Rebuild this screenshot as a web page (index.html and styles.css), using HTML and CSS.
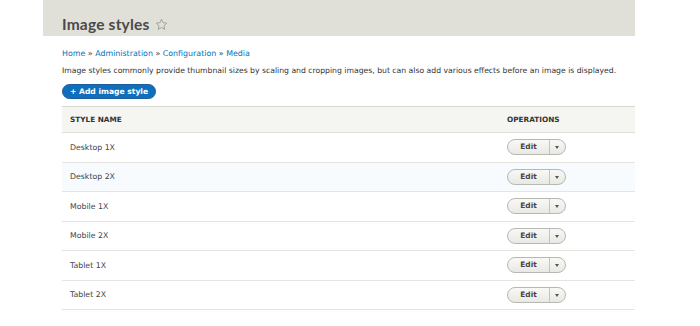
FILE: index.html
```html
<!DOCTYPE html>
<html>
<head>
<meta charset="utf-8">
<link rel="stylesheet" href="styles.css">
</head>
<body>
<div class="page">
  <header class="head">
    <h1 class="title">Image styles <svg class="star" width="13" height="13" viewBox="0 0 24 24"><path d="M12 2.5l2.9 6.2 6.8.8-5 4.7 1.3 6.7L12 17.6l-6 3.3 1.3-6.7-5-4.7 6.8-.8z" fill="none" stroke="#9a9a90" stroke-width="1.6" stroke-linejoin="round"/></svg></h1>
  </header>
  <main class="content">
    <nav class="crumbs"><a>Home</a> » <a>Administration</a> » <a>Configuration</a> » <a>Media</a></nav>
    <p class="desc">Image styles commonly provide thumbnail sizes by scaling and cropping images, but can also add various effects before an image is displayed.</p>
    <div class="actions"><a class="btn-primary">+ Add image style</a></div>
    <table class="tbl">
      <thead>
        <tr><th class="c-name">Style name</th><th class="c-ops">Operations</th></tr>
      </thead>
      <tbody>
        <tr><td>Desktop 1X</td><td class="c-ops"><span class="drop"><span class="drop-main">Edit</span><span class="drop-arrow"></span></span></td></tr>
        <tr class="even"><td>Desktop 2X</td><td class="c-ops"><span class="drop"><span class="drop-main">Edit</span><span class="drop-arrow"></span></span></td></tr>
        <tr><td>Mobile 1X</td><td class="c-ops"><span class="drop"><span class="drop-main">Edit</span><span class="drop-arrow"></span></span></td></tr>
        <tr><td>Mobile 2X</td><td class="c-ops"><span class="drop"><span class="drop-main">Edit</span><span class="drop-arrow"></span></span></td></tr>
        <tr><td>Tablet 1X</td><td class="c-ops"><span class="drop"><span class="drop-main">Edit</span><span class="drop-arrow"></span></span></td></tr>
        <tr><td>Tablet 2X</td><td class="c-ops"><span class="drop"><span class="drop-main">Edit</span><span class="drop-arrow"></span></span></td></tr>
      </tbody>
    </table>
  </main>
</div>
</body>
</html>
```
FILE: styles.css
```css
html, body { margin: 0; padding: 0; background: #fff; }
body { font-family: "DejaVu Sans", Verdana, sans-serif; color: #333; }
.page { width: 592px; margin-left: 43px; overflow: hidden; }
.head { background: #e0e0d8; height: 36px; padding: 0 19px; box-sizing: border-box; display: flex; align-items: flex-end; }
.title { margin: 0 0 3px; font-family: Lato, "DejaVu Sans", sans-serif; font-size: 15.5px; font-weight: bold; color: #4a4a4a; display: flex; align-items: center; gap: 5px; line-height: 18px; letter-spacing: 0.2px; }
.star { display: block; margin-top: 0; }
.content { padding: 0 0 0 19px; }
.crumbs { font-size: 7.9px; margin-top: 13px; line-height: 10px; color: #333; }
.crumbs a { color: #0074bd; }
.desc { font-size: 7.7px; line-height: 10px; margin: 7px 0 0; white-space: nowrap; color: #333; }
.actions { margin-top: 3px; }
.btn-primary { display: inline-block; background: #0f6fbd; color: #fff; font-weight: bold; font-size: 7.6px; line-height: 13px; padding: 0 7px; border-radius: 8px; border: 1px solid #1f5e9c; }
.tbl { width: 573px; border-collapse: collapse; margin-top: 7px; font-size: 7.8px; }
.tbl th { background: #f5f5f2; text-align: left; text-transform: uppercase; font-weight: bold; color: #333; height: 25px; padding: 0 8px; border-top: 1px solid #d8d8d3; border-bottom: 1px solid #e0e0db; font-size: 7.3px; }
.tbl td { height: 28.5px; padding: 0 8px; border-bottom: 1px solid #e6e4df; color: #444; }
.tbl tr.even td { background: #f7fbfe; }
.c-ops { width: 120px; }
.drop { display: inline-flex; height: 16px; border: 1px solid #b8b8b2; border-radius: 9px; background: linear-gradient(#f8f8f6, #e8e8e4); vertical-align: middle; box-sizing: border-box; }
.drop-main { width: 41px; text-align: center; font-weight: bold; font-size: 7.4px; line-height: 14px; color: #444; border-right: 1px solid #c4c4be; }
.drop-arrow { width: 15px; position: relative; }
.drop-arrow::after { content: ""; position: absolute; left: 5px; top: 6px; border-left: 2.5px solid transparent; border-right: 2.5px solid transparent; border-top: 3px solid #555; }
```
